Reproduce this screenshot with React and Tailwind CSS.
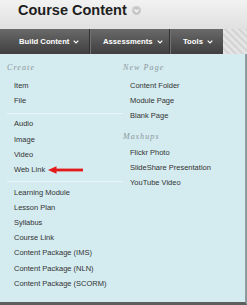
import React from "react";

function Chevron() {
  return (
    <svg width="6" height="4" viewBox="0 0 6 4" className="shrink-0">
      <path d="M0.7 0.7 L3 3 L5.3 0.7" stroke="#ffffff" strokeWidth="1.2" fill="none" />
    </svg>
  );
}

function NavItem({ cls, label }) {
  return (
    <div className={cls}>
      <span className="text-[7.7px] font-bold text-white leading-none whitespace-nowrap">{label}</span>
      <Chevron />
    </div>
  );
}

function Row({ children, cls = "" }) {
  return (
    <div className={"h-[15.2px] flex items-center pl-[7px] text-[7.5px] text-[#333] leading-none whitespace-nowrap " + cls}>
      {children}
    </div>
  );
}

function Head({ children, cls = "" }) {
  return (
    <div className={"h-[15.2px] flex items-center text-[8px] italic font-['Liberation_Serif',serif] tracking-[1.1px] text-[#8b979b] leading-none whitespace-nowrap " + cls}>
      {children}
    </div>
  );
}

function Sep({ cls }) {
  return <div className={"h-px w-[116px] bg-[#e8f4f7] " + cls} />;
}

export default function App() {
  return (
    <div className="w-[247px] h-[305px] overflow-hidden font-['Liberation_Sans',Arial,sans-serif] bg-[#d4ebf0]">
      <div className="h-[29px] bg-gradient-to-b from-[#f2f2f2] to-[#e0e0e0] pl-[18px] pt-[3px] flex items-start">
        <div className="flex items-center gap-[5px]">
          <span className="text-[14.5px] leading-none font-bold text-[#1e1e1e] whitespace-nowrap">Course Content</span>
          <svg width="9" height="9" viewBox="0 0 9 9" className="mt-[1px]">
            <circle cx="4.5" cy="4.5" r="4.5" fill="#c9c9c9" />
            <path d="M2.6 3.7 L4.5 5.6 L6.4 3.7" stroke="#ffffff" strokeWidth="1.2" fill="none" />
          </svg>
        </div>
      </div>
      <div className="h-[25px] flex">
        <NavItem
          cls="w-[90px] h-full pl-[19px] flex items-center gap-[4px] bg-gradient-to-b from-[#6a6a6a] to-[#3f3f3f] border-r border-r-[#323232]"
          label="Build Content"
        />
        <NavItem
          cls="w-[80px] h-full pl-[12px] flex items-center gap-[4px] bg-gradient-to-b from-[#6a6a6a] to-[#3f3f3f] border-l border-l-[#727272] border-r border-r-[#323232]"
          label="Assessments"
        />
        <NavItem
          cls="w-[53px] h-full pl-[12px] flex items-center gap-[4px] bg-gradient-to-b from-[#6a6a6a] to-[#3f3f3f] border-l border-l-[#727272]"
          label="Tools"
        />
        <div className="flex-1 h-full bg-[repeating-linear-gradient(45deg,#e4e4e4_0px,#e4e4e4_3px,#d4d4d4_3px,#d4d4d4_5px)]" />
      </div>
      <div className="h-[251px] bg-[#d4ebf0] border-r-2 border-r-[#8e9a9d] border-b-[3px] border-b-[#5e5e5e] flex">
        <div className="w-[116px] shrink-0 pl-[7px] pt-[6px] flex flex-col">
          <Head cls="mb-[3px]">Create</Head>
          <Row>Item</Row>
          <Row>File</Row>
          <Sep cls="mt-[4px] mb-[3px]" />
          <Row>Audio</Row>
          <Row>Image</Row>
          <Row>Video</Row>
          <Row>
            <span>Web Link</span>
            <svg width="35" height="8" viewBox="0 0 35 8" className="ml-[3px] shrink-0">
              <polygon points="0,4 8.5,0.3 8.5,7.7" fill="#e41a1a" />
              <rect x="8" y="2.6" width="27" height="2.8" fill="#e41a1a" />
            </svg>
          </Row>
          <Sep cls="mt-[3.5px] mb-[3px]" />
          <Row>Learning Module</Row>
          <Row>Lesson Plan</Row>
          <Row>Syllabus</Row>
          <Row>Course Link</Row>
          <Row>Content Package (IMS)</Row>
          <Row>Content Package (NLN)</Row>
          <Row>Content Package (SCORM)</Row>
        </div>
        <div className="flex-1 pl-[7px] pt-[6px] flex flex-col">
          <Head cls="mb-[3px]">New Page</Head>
          <Row>Content Folder</Row>
          <Row>Module Page</Row>
          <Row>Blank Page</Row>
          <Head cls="mt-[5.9px]">Mashups</Head>
          <Row>Flickr Photo</Row>
          <Row>SlideShare Presentation</Row>
          <Row>YouTube Video</Row>
        </div>
      </div>
    </div>
  );
}
